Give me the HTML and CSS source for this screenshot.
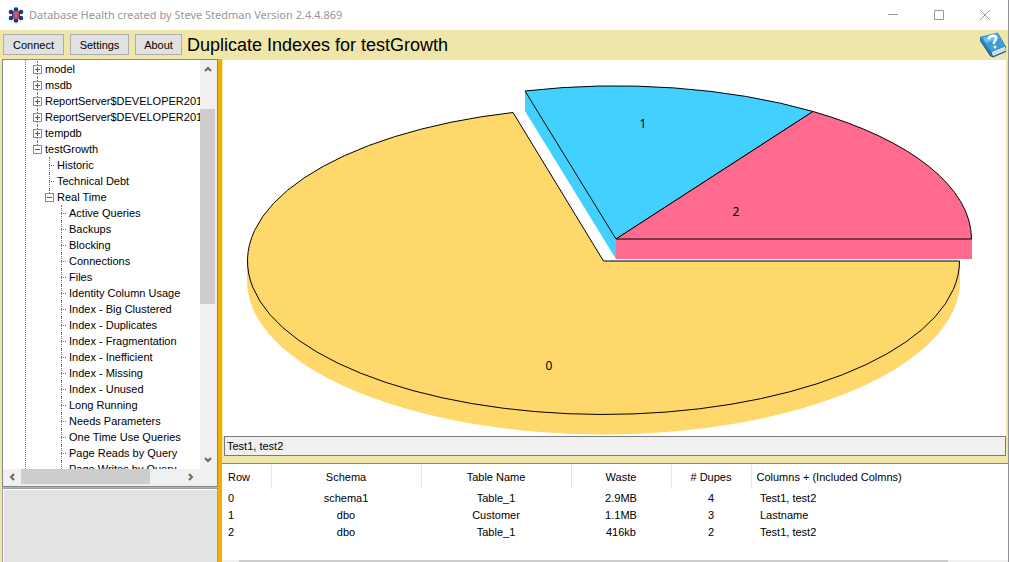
FILE: index.html
```html
<!DOCTYPE html>
<html lang="en">
<head>
<meta charset="utf-8">
<title>Database Health</title>
<link rel="stylesheet" href="styles.css">
</head>
<body>
<div class="window">
  <header class="titlebar">
    <svg class="app-icon" viewBox="0 0 16 16" aria-hidden="true">
      <g fill="#1d3b85"><circle cx="8" cy="2.500" r="2.300"/><circle cx="8" cy="13.500" r="2.300"/><circle cx="3" cy="5" r="2.300"/><circle cx="13" cy="5" r="2.300"/><circle cx="3" cy="11" r="2.300"/><circle cx="13" cy="11" r="2.300"/><path d="M4 4h8v8H4z"/></g>
      <path d="M6 4h4l1 1v6l-1 1H6l-1-1V5z" fill="#c04a60"/>
      <path d="M8 5v6" stroke="#e0707c"/>
    </svg>
    <span class="window-title">Database Health created by Steve Stedman Version 2.4.4.869</span>
    <button class="window-button" aria-label="Minimize"><svg viewBox="0 0 10 10"><path d="M0 4.500h10"/></svg></button>
    <button class="window-button" aria-label="Maximize"><svg viewBox="0 0 10 10"><path d="M.5.5h9v9h-9z"/></svg></button>
    <button class="window-button" aria-label="Close"><svg viewBox="0 0 10 10"><path d="M0 0l10 10M10 0L0 10"/></svg></button>
  </header>

  <div class="toolbar">
    <button class="tool connect">Connect</button>
    <button class="tool settings">Settings</button>
    <button class="tool about">About</button>
    <h1 class="report-title">Duplicate Indexes for testGrowth</h1>
    <button class="help" aria-label="Help">
      <svg viewBox="0 0 27 26">
        <path d="M0 5V9L10 24L13 25.500L26 20V15L18 1z" fill="#1a6598"/>
        <path d="M11.500 20L25 14.500L26 18.500L13 24z" fill="#e3edf3"/>
        <path d="M12.500 22L25.500 16.500" stroke="#a5b8c4" stroke-width=".7"/>
        <path d="M0 5L17.500 0.500L25.500 14L11.500 20z" fill="#3a9fd6"/>
        <path d="M3 6L16.500 2L19 6L6 11z" fill="#70c2ea"/>
        <path d="M0 5L11.500 20L12.500 24.500L0 9z" fill="#2a80b5"/>
        <path d="M9 7.500C8.500 3.500 15 2.500 16 6C16.500 9 13 9 14 12" fill="none" stroke="#fff" stroke-width="2.500"/>
        <circle cx="15" cy="15" r="1.500" fill="#fff"/>
      </svg>
    </button>
  </div>

  <main class="workspace">
    <aside class="sidebar">
      <nav class="tree-panel" aria-label="Databases">
        <div class="tree-view">
          <div class="tree-root">
            <ul class="tree">
              <li><button class="expander plus" aria-label="Expand model"></button>model</li>
              <li><button class="expander plus" aria-label="Expand msdb"></button>msdb</li>
              <li><button class="expander plus" aria-label="Expand ReportServer"></button>ReportServer$DEVELOPER2016</li>
              <li><button class="expander plus" aria-label="Expand ReportServer"></button>ReportServer$DEVELOPER2016</li>
              <li><button class="expander plus" aria-label="Expand tempdb"></button>tempdb</li>
              <li><button class="expander" aria-label="Collapse testGrowth"></button>testGrowth
                <ul>
                  <li>Historic</li>
                  <li>Technical Debt</li>
                  <li><button class="expander" aria-label="Collapse Real Time"></button>Real Time
                    <ul>
                      <li>Active Queries</li>
                      <li>Backups</li>
                      <li>Blocking</li>
                      <li>Connections</li>
                      <li>Files</li>
                      <li>Identity Column Usage</li>
                      <li>Index - Big Clustered</li>
                      <li>Index - Duplicates</li>
                      <li>Index - Fragmentation</li>
                      <li>Index - Inefficient</li>
                      <li>Index - Missing</li>
                      <li>Index - Unused</li>
                      <li>Long Running</li>
                      <li>Needs Parameters</li>
                      <li>One Time Use Queries</li>
                      <li>Page Reads by Query</li>
                      <li>Page Writes by Query</li>
                      <li></li>
                    </ul>
                  </li>
                </ul>
              </li>
            </ul>
          </div>
        </div>
        <div class="scroll-v">
          <button aria-label="Scroll up"><svg viewBox="0 0 8 6"><path d="M1 5l3-3 3 3"/></svg></button>
          <div class="track-v"><div class="thumb-v"></div></div>
          <button aria-label="Scroll down"><svg viewBox="0 0 8 6"><path d="M1 1l3 3 3-3"/></svg></button>
        </div>
        <div class="scroll-h">
          <button aria-label="Scroll left"><svg class="side" viewBox="0 0 6 8"><path d="M5 1L2 4l3 3"/></svg></button>
          <div class="track-h"><div class="thumb-h"></div></div>
          <button aria-label="Scroll right"><svg class="side" viewBox="0 0 6 8"><path d="M1 1l3 3-3 3"/></svg></button>
        </div>
      </nav>
      <div class="info-panel"></div>
    </aside>
    <div class="splitter"></div>

    <section class="report">
      <div class="chart">
        <svg viewBox="223 60 783 376" preserveAspectRatio="xMidYMid meet" role="img" aria-label="Duplicate index waste">
          <path fill="#ffd86b" d="M247 261V281A356.500 153.500 0 0 0 960 281V261z"/>
          <path class="slice" fill="#ffd86b" d="M603.500 261H959.500A356 153.500 0 1 1 513 112.500z"/>
          <path fill="#42d0ff" d="M525 91L616 239V259L525 111z"/>
          <path fill="#ff6b8f" d="M616 239H972V259H616z"/>
          <path class="slice" fill="#42d0ff" d="M616 239L525 91A356 153.500 0 0 1 813 111.500z"/>
          <path class="slice" fill="#ff6b8f" d="M616 239L813 111.500A356 153.500 0 0 1 971.500 239z"/>
          <text x="549" y="370">0</text>
          <text x="643" y="128">1</text>
          <text x="736" y="216">2</text>
        </svg>
      </div>
      <input class="columns-box" type="text" value="Test1, test2" aria-label="Columns" readonly>
      <div class="grid-panel">
        <table>
          <colgroup><col class="c-row"><col class="c-name"><col class="c-name"><col class="c-waste"><col class="c-dupes"><col></colgroup>
          <thead><tr><th>Row</th><th>Schema</th><th>Table Name</th><th>Waste</th><th># Dupes</th><th>Columns + (Included Colmns)</th></tr></thead>
          <tbody>
            <tr><td>0</td><td>schema1</td><td>Table_1</td><td>2.9MB</td><td>4</td><td>Test1, test2</td></tr>
            <tr><td>1</td><td>dbo</td><td>Customer</td><td>1.1MB</td><td>3</td><td>Lastname</td></tr>
            <tr><td>2</td><td>dbo</td><td>Table_1</td><td>416kb</td><td>2</td><td>Test1, test2</td></tr>
          </tbody>
        </table>
        <div class="grid-scroll"><div class="grid-thumb"></div></div>
      </div>
    </section>
  </main>
</div>
</body>
</html>
```

FILE: styles.css
```css
* { box-sizing: border-box; }
body {
  margin: 0;
  color: #000;
  font: 11px/16px "Liberation Sans", Arial, sans-serif;
}
button { padding: 0; border: 0; background: none; color: inherit; font: inherit; }
svg { display: block; }
ul { margin: 0; padding: 0; list-style: none; }

.window {
  display: flex;
  flex-direction: column;
  height: 100vh;
  border-right: 1px solid #929296;
  background: #efe6aa;
  overflow: hidden;
}

.titlebar { display: flex; align-items: center; height: 30px; padding-left: 8px; background: #fff; }
.app-icon { width: 16px; height: 16px; }
.window-title {
  flex: 1;
  padding-left: 5px;
  color: #989898;
  font: 11px/16px "Noto Sans", "Open Sans", sans-serif;
  white-space: nowrap;
}
.window-button { display: grid; place-items: center; width: 46px; height: 28px; }
.window-button svg { width: 10px; height: 10px; fill: none; stroke: #99999d; }

.toolbar { display: flex; align-items: center; height: 29px; padding-left: 3px; }
.tool { height: 21px; margin-right: 6px; border: 1px solid #adadad; background: #e1e1e1; }
.connect { width: 61px; }
.settings { width: 59px; }
.about { width: 47px; margin-right: 5px; }
.report-title { flex: 1; margin: 0; font: 18px/24px "Liberation Sans", Arial, sans-serif; white-space: nowrap; }
.help { margin-right: 1px; }
.help svg { width: 27px; height: 26px; }

.workspace { display: flex; flex: 1; min-height: 0; }
.sidebar { display: grid; grid-template-rows: 428fr 75fr; width: 218px; padding-left: 2px; }
.tree-panel {
  display: grid;
  grid-template: minmax(0, 1fr) 17px / minmax(0, 1fr) 17px;
  min-height: 0;
  border: 1px solid #828790;
  background: #f0f0f0;
}
.tree-view { overflow: hidden; background: #fff; }
.tree-root { margin-left: 22px; padding: 1px 0 0 11px; border-left: 1px dotted #80775a; white-space: nowrap; }
.tree li { position: relative; min-height: 16px; padding-left: 8px; }
.tree ul { margin-left: 4px; }
.tree li::before {
  content: "";
  position: absolute;
  top: 0;
  bottom: 0;
  left: 0;
  border-left: 1px dotted #80775a;
}
.tree li:last-child::before { bottom: auto; height: 8px; }
.tree li::after {
  content: "";
  position: absolute;
  top: 8px;
  left: 0;
  width: 5px;
  border-top: 1px dotted #80775a;
}
.expander {
  position: absolute;
  z-index: 1;
  top: 4px;
  left: -4px;
  width: 9px;
  height: 9px;
  border: 1px solid #848b94;
  background: linear-gradient(#2d5fa0, #2d5fa0) center / 5px 1px no-repeat #fff;
}
.plus {
  background:
    linear-gradient(#2d5fa0, #2d5fa0) center / 5px 1px no-repeat,
    linear-gradient(#2d5fa0, #2d5fa0) center / 1px 5px no-repeat,
    #fff;
}

.scroll-v { display: flex; flex-direction: column; padding-right: 2px; }
.scroll-v button, .scroll-h button { display: grid; place-items: center; }
.scroll-v button { height: 18px; }
.scroll-v svg, .scroll-h svg { width: 8px; height: 6px; fill: none; stroke: #70684f; stroke-width: 2; }
.scroll-h .side { width: 6px; height: 8px; }
.track-v { flex: 1; padding-top: 31px; }
.thumb-v { width: 15px; height: 57%; background: #cdcdcd; }
.scroll-h { display: flex; grid-column: 1 / 2; padding-bottom: 2px; }
.scroll-h button { width: 18px; }
.track-h { flex: 1; }
.thumb-h { width: 80%; height: 100%; background: #cdcdcd; }
.info-panel { margin-top: 1px; border: 1px solid #a0a0a0; border-bottom: 0; background: #e3e3e3; box-shadow: inset 1px 1px #fff, 0 -1px #f0b000; }
.splitter { width: 4px; background: #f0b000; }

.report { display: flex; flex: 1; flex-direction: column; min-width: 0; }
.chart { flex: 1; min-height: 0; margin: 1px 2px 0 1px; background: #fff; }
.chart svg { width: 100%; height: 100%; }
.slice { stroke: #000; stroke-width: 1; }
.chart text { font: 12px "Noto Sans", sans-serif; text-anchor: middle; }
.columns-box {
  height: 20px;
  margin: 0 2px 7px;
  padding: 0 2px;
  border: 1px solid #7a7a7a;
  background: #f0f0f0;
  color: #000;
  font: inherit;
}
.grid-panel {
  display: flex;
  flex-direction: column;
  height: 99px;
  border-top: 1px solid #828790;
  background: #fff;
}
table { width: 100%; table-layout: fixed; border-collapse: collapse; }
.c-row { width: 49px; }
.c-name { width: 150px; }
.c-waste { width: 100px; }
.c-dupes { width: 80px; }
th { height: 25px; padding: 0; border-right: 1px solid #e5e5e5; font-weight: 400; }
td { height: 17px; padding: 0; text-align: center; }
th:first-child, td:first-child { padding-left: 6px; text-align: left; }
th:last-child { padding-left: 5px; border: 0; text-align: left; }
td:last-child { padding-left: 9px; text-align: left; }
.grid-scroll { height: 2px; margin-top: auto; padding: 0 60px 0 17px; background: #f0f0f0; }
.grid-thumb { height: 2px; background: #cdcdcd; }
```
